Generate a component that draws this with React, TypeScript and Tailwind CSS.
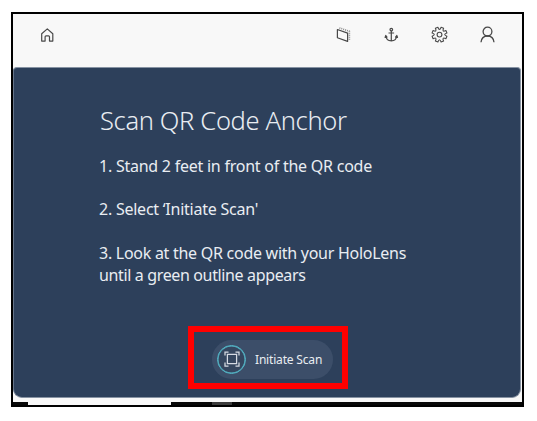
import React from 'react';

const steps = [
  { gap: '', lines: [{ text: '1. Stand 2 feet in front of the QR code', style: 'tracking-[-0.24px]' }] },
  { gap: 'mt-[21.7px]', lines: [{ text: '2. Select ‘Initiate Scan\'', style: 'tracking-[-0.24px]' }] },
  {
    gap: 'mt-[22.5px]',
    lines: [
      { text: '3. Look at the QR code with your HoloLens', style: 'tracking-[-0.27px]' },
      { text: 'until a green outline appears', style: 'tracking-[-0.36px]' },
    ],
  },
];

const iconProps = {
  fill: 'none',
  stroke: '#484848',
  strokeWidth: 1.2,
  strokeLinejoin: 'round' as const,
};

function HomeIcon() {
  return (
    <svg className="h-[18px] w-[18px]" viewBox="0 0 18 18" {...iconProps}>
      <path d="M3.700 7.700 9.300 2.900l5.500 4.800v7.400h-3.300v-4.300a1 1 0 0 0-1-1H8.100a1 1 0 0 0-1 1v4.300H3.700Z" />
    </svg>
  );
}

function SlateIcon() {
  return (
    <svg className="h-[18px] w-[18px]" viewBox="0 0 18 18" {...iconProps}>
      <path d="m3.400 3.500 10.200 3.600v8.300L3.400 11.800Z" />
      <path d="m5.400 1.900 10 3.400v8.600" strokeDasharray="1 1" strokeWidth="1.600" stroke="#888888" />
    </svg>
  );
}

function AnchorIcon() {
  return (
    <svg className="h-[18px] w-[18px]" viewBox="0 0 18 18" {...iconProps}>
      <circle cx="9.300" cy="3.600" r="1.300" />
      <path d="M9.300 5v10.300M6.500 7h5.600M4 10c.1 3.400 2.300 4.800 5.300 4.800s5.200-1.400 5.300-4.800" />
      <path d="m3.800 9.500-.7 2 1.900-.3ZM14.800 9.500l.7 2-1.900-.3Z" fill="#484848" />
    </svg>
  );
}

function GearIcon() {
  return (
    <svg className="h-[18px] w-[18px]" viewBox="0 0 18 18" {...iconProps} strokeWidth={1.1}>
      <g transform="translate(.5 -.4)">
        <circle cx="9" cy="9" r="2.400" />
        <path d="M7.400 1.600Q9 6 10.600 1.600L13.100 2.600Q11.120 6.880 15.400 4.900L16.400 7.400Q12 9 16.400 10.600L15.400 13.100Q11.120 11.120 13.100 15.400L10.600 16.400Q9 12 7.400 16.400L4.900 15.400Q6.880 11.120 2.600 13.100L1.600 10.600Q6 9 1.600 7.400L2.600 4.900Q6.880 6.880 4.900 2.600Z" />
      </g>
    </svg>
  );
}

function PersonIcon() {
  return (
    <svg className="h-[18px] w-[18px]" viewBox="0 0 18 18" {...iconProps} strokeWidth={1.3}>
      <circle cx="9.500" cy="5.600" r="4.400" />
      <path d="M3 16.300c.4-3.900 3-6.300 6.500-6.300s6.100 2.400 6.500 6.300" />
    </svg>
  );
}

function ScanIcon() {
  return (
    <svg className="h-4 w-4" viewBox="0 0 16 16" fill="none" stroke="#d6dae3" strokeWidth="1.250">
      <path d="M3.400 3.400h9.200v9.200H3.400ZM1 4.500V1h3.500M11.500 1H15v3.500M15 11.500V15h-3.500M4.500 15H1v-3.500" />
    </svg>
  );
}

export default function App() {
  return (
    <div className="h-[421px] w-[537px] overflow-hidden bg-white pt-3 pl-[11px] font-['Noto_Sans','Open_Sans',sans-serif]">
      <div className="flex h-[395px] w-[513px] flex-col border-2 border-black bg-[#f8f8f8]">
        <header className="flex h-[53px] shrink-0 items-start justify-between pt-3 pr-[26px] pl-[25px]">
          <HomeIcon />
          <nav className="flex gap-[30px]">
            <SlateIcon />
            <AnchorIcon />
            <GearIcon />
            <PersonIcon />
          </nav>
        </header>
        <main className="flex h-[331px] w-[508px] shrink-0 flex-col rounded-t-[4px] rounded-b-[9px] border border-t-[#8793a3] border-r-[#8793a3] border-b-[#8793a3] border-l-[#66758a] bg-[#2d405b] pl-[85px] whitespace-nowrap text-[#e9edf2]">
          <h1 className="mt-[34px] h-9 pl-px text-[25.5px] leading-9 font-light"><span className="tracking-[-0.34px]">Scan QR Code Anchor</span></h1>
          <div className="mt-[18px] flex flex-col text-[16px] leading-[21.500px]">
            {steps.map((step, i) => (
              <div key={i} className={step.gap}>
                {step.lines.map((line) => (
                  <p key={line.text}><span className={line.style}>{line.text}</span></p>
                ))}
              </div>
            ))}
          </div>
          <div className="mt-auto mb-2 ml-[89px] flex h-[63px] w-40 items-center border-[6px] border-[#ff0000] pt-[3px] pl-[18px]">
            <button className="flex h-[39px] w-[121px] items-center gap-[9px] rounded-full bg-[#3c4e69] pl-[5px] text-[12px] leading-none">
              <span className="flex size-[29px] items-center justify-center rounded-full border border-[#56bccd] bg-[#35465f] shadow-[inset_0_0_0_0.5px_#56bccd]">
                <ScanIcon />
              </span>
              <span className="pt-px tracking-[-0.18px]">Initiate Scan</span>
            </button>
          </div>
        </main>
        <div className="h-1 shrink-0 bg-[#f8f8f8]" />
        <footer className="flex h-[3px] shrink-0 bg-[#080808]">
          <div className="ml-[15px] w-[143px] bg-[#f8f8f8]" />
          <div className="ml-[41px] w-5 bg-[#3c3c3c]" />
        </footer>
      </div>
    </div>
  );
}
